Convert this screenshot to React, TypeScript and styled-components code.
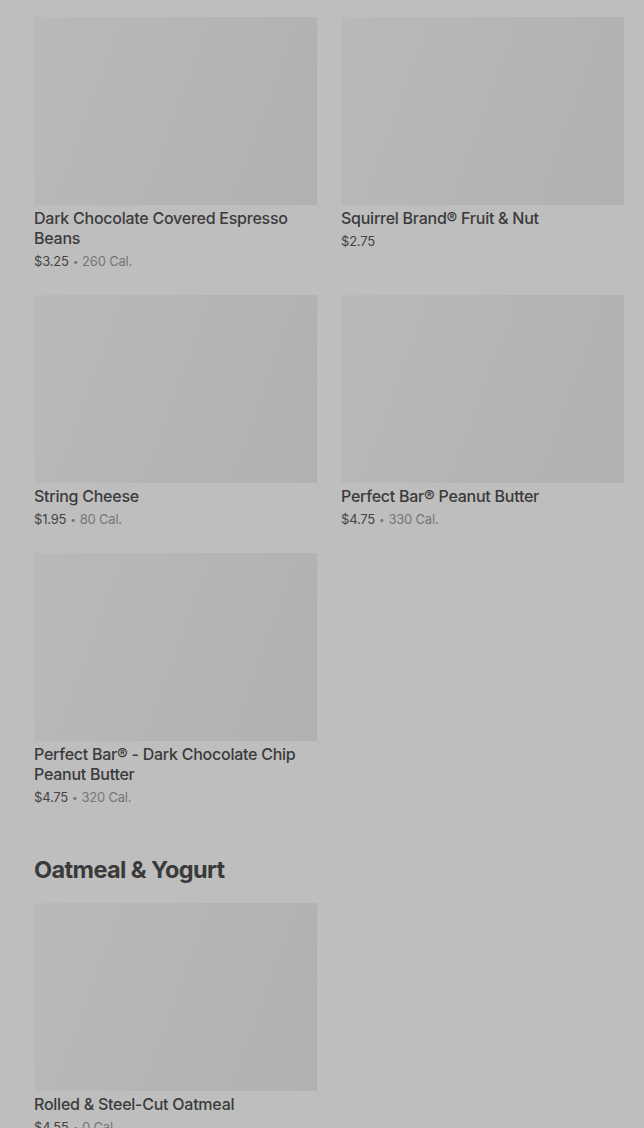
import styled, { createGlobalStyle } from "styled-components";

const Global = createGlobalStyle`
  html, body {
    margin: 0;
    padding: 0;
    background: #bebebe;
  }
  body {
    font-family: Inter, "Noto Sans", sans-serif;
  }
`;

type Item = { name: string; price: string; cal?: string };

const snacks: Item[] = [
  { name: "Dark Chocolate Covered Espresso Beans", price: "$3.25", cal: "260 Cal." },
  { name: "Squirrel Brand® Fruit & Nut", price: "$2.75" },
  { name: "String Cheese", price: "$1.95", cal: "80 Cal." },
  { name: "Perfect Bar® Peanut Butter", price: "$4.75", cal: "330 Cal." },
  { name: "Perfect Bar® - Dark Chocolate Chip Peanut Butter", price: "$4.75", cal: "320 Cal." },
];

const oatmeal: Item[] = [
  { name: "Rolled & Steel-Cut Oatmeal", price: "$4.55", cal: "0 Cal." },
];

const ItemCard = ({ item }: { item: Item }) => (
  <Card>
    <Photo />
    <Name>{item.name}</Name>
    <Meta>
      {item.price}
      {item.cal && (
        <>
          <Dot>•</Dot>
          <Cal>{item.cal}</Cal>
        </>
      )}
    </Meta>
  </Card>
);

const App = () => {
  return (
    <Page>
      <Global />
      <Grid>
        {snacks.map((s) => (
          <ItemCard key={s.name} item={s} />
        ))}
      </Grid>
      <Section>
        <Heading>Oatmeal &amp; Yogurt</Heading>
        <Grid>
          {oatmeal.map((s) => (
            <ItemCard key={s.name} item={s} />
          ))}
        </Grid>
      </Section>
    </Page>
  );
};

export default App;

const Page = styled.main`
  padding: 17px 20px 0 34px;
  height: 1128px;
  box-sizing: border-box;
  overflow: hidden;
`;
const Grid = styled.div`
  display: grid;
  grid-template-columns: 283px 283px;
  column-gap: 24px;
  row-gap: 24px;
  align-items: start;
`;
const Card = styled.div`
  display: flex;
  flex-direction: column;
`;
const Photo = styled.div`
  height: 188px;
  background: linear-gradient(110deg, #b9b9b9 0%, #b5b5b5 50%, #b1b1b1 100%);
`;
const Name = styled.div`
  margin-top: 3px;
  font-size: 16px;
  line-height: 20px;
  font-weight: 500;
  letter-spacing: -0.25px;
  color: #3b3b3b;
`;
const Meta = styled.div`
  margin-top: 3px;
  height: 20px;
  font-size: 13px;
  line-height: 20px;
  letter-spacing: -0.2px;
  color: #444;
`;
const Dot = styled.span`
  display: inline-block;
  margin: 0 4px;
  font-size: 10px;
  line-height: 10px;
  vertical-align: 1px;
  color: #777;
`;
const Cal = styled.span`
  color: #767676;
`;
const Section = styled.section`
  margin-top: 47px;
`;
const Heading = styled.h2`
  margin: 0 0 17px;
  font-size: 23.5px;
  line-height: 32px;
  font-weight: 700;
  color: #3a3a3a;
  letter-spacing: -0.6px;
`;
